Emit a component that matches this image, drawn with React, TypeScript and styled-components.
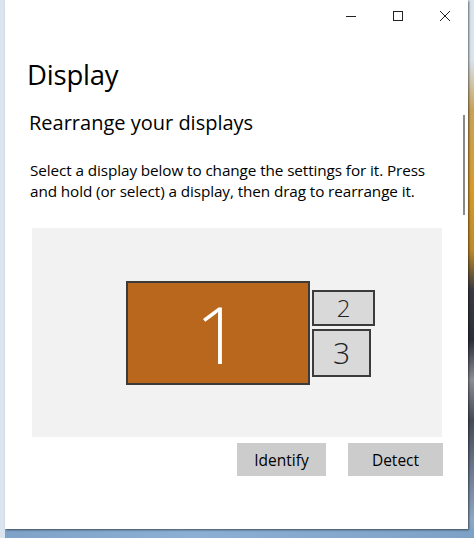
import React from "react";
import styled, { createGlobalStyle } from "styled-components";

const GlobalStyle = createGlobalStyle`
  html, body {
    margin: 0;
    padding: 0;
    width: 474px;
    height: 538px;
    overflow: hidden;
  }
  body {
    font-family: "Open Sans", "Noto Sans", "Liberation Sans", sans-serif;
    color: #000;
  }
`;

// Desktop behind the settings window: pale left edge, photo wallpaper on the right, blue taskbar glow below
const Desktop = styled.div`
  width: 474px;
  height: 538px;
  background:
    linear-gradient(180deg,
      #d9e4ee 0px, #d9e4ee 60px,
      #c9a25a 110px, #d99b2a 190px, #c08a2a 250px,
      #3a3a44 290px, #2c2f3a 340px, #8a8f98 380px,
      #454b58 420px, #6c7a90 470px, #8fa7c4 520px, #7ea4cb 538px);
  display: grid;
  grid-template-columns: 5px 463px 1fr;
  grid-template-rows: 529px 1fr;
`;

const LeftEdge = styled.div`
  background: #dbe5ef;
  grid-row: 1 / 3;
`;

const Taskbar = styled.div`
  grid-column: 2 / 4;
  background: linear-gradient(90deg, #7fa3c8, #8cb0d4 40%, #7ea2c6);
`;

const Window = styled.div`
  background: #fff;
  box-shadow: 1px 1px 2px rgba(0, 0, 0, 0.55);
  display: flex;
  flex-direction: column;
  position: relative;
`;

const TitleBar = styled.div`
  height: 31px;
  display: flex;
  justify-content: flex-end;
`;

const CaptionButton = styled.div`
  width: 47px;
  height: 31px;
  display: flex;
  align-items: center;
  justify-content: center;
  color: #222;
`;

const Body = styled.div`
  padding: 0 0 0 19px;
  display: flex;
  flex-direction: column;
`;

const PageTitle = styled.h1`
  margin: 26px 0 0 3px;
  font-size: 27.5px;
  font-weight: 400;
  line-height: 36px;
  letter-spacing: -0.2px;
`;

const SectionTitle = styled.h2`
  margin: 17px 0 0 5px;
  font-size: 20px;
  font-weight: 400;
  line-height: 26px;
  letter-spacing: 0;
`;

const Description = styled.p`
  margin: 24px 0 0 6px;
  font-size: 15.3px;
  line-height: 21px;
  width: 405px;
  letter-spacing: -0.1px;
`;

const Arrangement = styled.div`
  margin: 26px 0 0 8px;
  width: 410px;
  height: 209px;
  background: #f2f2f2;
  position: relative;
`;

// Monitors sit on a free canvas: their offsets are the arrangement itself
const Monitor = styled.div<{ $primary?: boolean; $size: number }>`
  position: absolute;
  box-sizing: border-box;
  border: 2px solid #3b3b3b;
  background: ${({ $primary }) => ($primary ? "#b9671c" : "#d9d9d9")};
  color: ${({ $primary }) => ($primary ? "#fff" : "#222")};
  display: flex;
  align-items: center;
  justify-content: center;
  font-family: "Open Sans", "Noto Sans", sans-serif;
  font-weight: 300;
  font-size: ${({ $size }) => $size}px;
  line-height: 1;
`;

const Actions = styled.div`
  margin: 6px 0 0 0;
  width: 419px;
  display: flex;
  justify-content: flex-end;
  gap: 22px;
`;

const Button = styled.button<{ $width: number }>`
  width: ${({ $width }) => $width}px;
  height: 33px;
  border: none;
  background: #cccccc;
  font-family: inherit;
  font-size: 15.5px;
  color: #000;
  padding: 0;
`;

const Scrollbar = styled.div`
  position: absolute;
  right: 3px;
  top: 115px;
  width: 2px;
  height: 100px;
  background: #8a8a8a;
`;

const monitors = [
  { id: 1, left: 94, top: 53, width: 184, height: 104, primary: true, size: 80 },
  { id: 2, left: 280, top: 62, width: 63, height: 36, size: 24 },
  { id: 3, left: 280, top: 101, width: 59, height: 48, size: 30 },
];

export default function App() {
  return (
    <>
      <GlobalStyle />
      <Desktop>
        <LeftEdge />
        <Window>
          <TitleBar>
            <CaptionButton>
              <svg width="10" height="10" viewBox="0 0 10 10">
                <path d="M0 5.5h10" stroke="currentColor" strokeWidth="1" />
              </svg>
            </CaptionButton>
            <CaptionButton>
              <svg width="10" height="10" viewBox="0 0 10 10">
                <rect x="0.5" y="0.5" width="9" height="9" fill="none" stroke="currentColor" strokeWidth="1" />
              </svg>
            </CaptionButton>
            <CaptionButton>
              <svg width="10" height="10" viewBox="0 0 10 10">
                <path d="M0 0L10 10M10 0L0 10" stroke="currentColor" strokeWidth="1" />
              </svg>
            </CaptionButton>
          </TitleBar>
          <Body>
            <PageTitle>Display</PageTitle>
            <SectionTitle>Rearrange your displays</SectionTitle>
            <Description>
              Select a display below to change the settings for it. Press and hold (or select) a display, then drag to rearrange it.
            </Description>
            <Arrangement>
              {monitors.map((m) => (
                <Monitor
                  key={m.id}
                  $primary={m.primary}
                  $size={m.size}
                  style={{ left: m.left, top: m.top, width: m.width, height: m.height }}
                >
                  {m.id}
                </Monitor>
              ))}
            </Arrangement>
            <Actions>
              <Button $width={89}>Identify</Button>
              <Button $width={95}>Detect</Button>
            </Actions>
          </Body>
          <Scrollbar />
        </Window>
        <Taskbar />
      </Desktop>
    </>
  );
}
